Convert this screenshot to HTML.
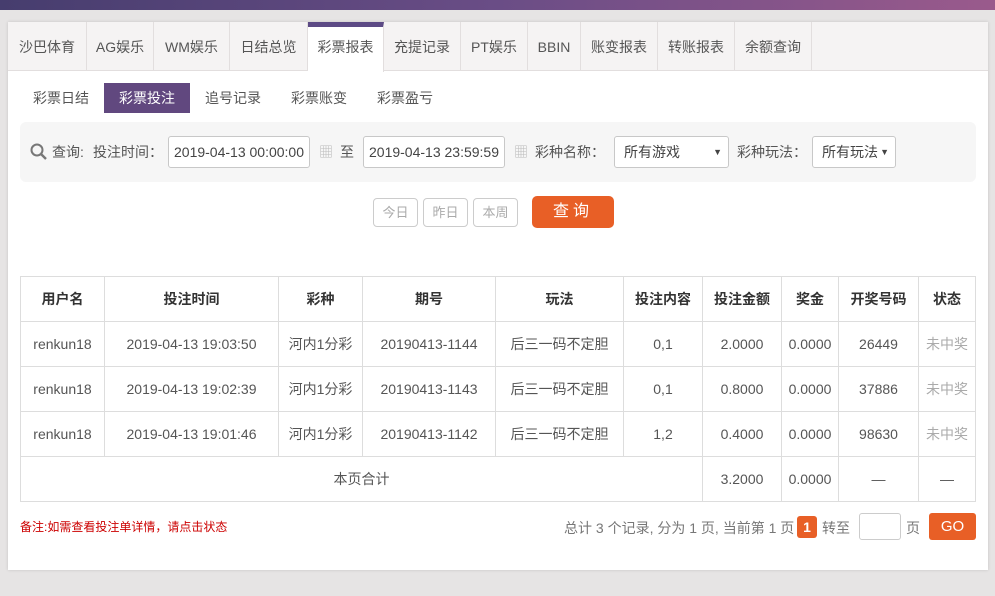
<!DOCTYPE html><html><head><meta charset="utf-8"><style>
*{margin:0;padding:0;box-sizing:border-box}
body{width:995px;height:596px;overflow:hidden;background:#e6e4e4;font-family:"Liberation Sans","Noto Sans CJK SC",sans-serif;font-size:14px;color:#555;position:relative}
.top{position:absolute;left:0;top:0;width:995px;height:10px;background:linear-gradient(90deg,#463d6e,#6a4d86 50%,#9a5a8c)}
.panel{position:absolute;left:8px;top:22px;width:980px;height:548px;background:#fff;box-shadow:0 0 3px rgba(0,0,0,.15)}
.tabs{position:absolute;left:0;top:0;width:980px;height:49px;background:#f5f3f3;border-bottom:1px solid #e2dede}
.tab{position:absolute;top:0;height:49px;line-height:50px;text-align:center;border-right:1px solid #e2dede;color:#555}
.tab.on{background:#fff;height:50px;border-top:5px solid #5c4a85;line-height:40px}
.sub{position:absolute;top:61px;height:30px;line-height:30px;color:#555}
.sub.on{background:#61487f;color:#fff;text-align:center}
.q{position:absolute;left:12px;top:100px;width:956px;height:60px;background:#f6f6f6;border-radius:6px}
.abs{position:absolute}
.inp{position:absolute;top:14px;height:32px;border:1px solid #c8c8c8;border-radius:3px;background:#fff;line-height:30px;padding-left:5px;color:#444}
.btn{position:absolute;top:176px;height:29px;border:1px solid #ccc;border-radius:4px;color:#aaa;font-size:13px;text-align:center;line-height:27px}
table{position:absolute;left:12px;top:254px;border-collapse:collapse;width:956px}
td,th{border:1px solid #ddd;height:45px;text-align:center;color:#555;font-size:14px}
th{font-weight:bold;color:#333;background:#fff}
.g{color:#aaa}
</style></head><body>
<div class="top"></div>
<div class="panel">
<div class="tabs">
<div class="tab" style="left:0;width:79px">沙巴体育</div>
<div class="tab" style="left:79px;width:67px">AG娱乐</div>
<div class="tab" style="left:146px;width:76px">WM娱乐</div>
<div class="tab" style="left:222px;width:78px">日结总览</div>
<div class="tab on" style="left:300px;width:76px">彩票报表</div>
<div class="tab" style="left:376px;width:77px">充提记录</div>
<div class="tab" style="left:453px;width:67px">PT娱乐</div>
<div class="tab" style="left:520px;width:53px">BBIN</div>
<div class="tab" style="left:573px;width:77px">账变报表</div>
<div class="tab" style="left:650px;width:77px">转账报表</div>
<div class="tab" style="left:727px;width:77px">余额查询</div>
</div>
<div class="sub" style="left:25px">彩票日结</div>
<div class="sub on" style="left:96px;width:86px">彩票投注</div>
<div class="sub" style="left:197px">追号记录</div>
<div class="sub" style="left:283px">彩票账变</div>
<div class="sub" style="left:369px">彩票盈亏</div>
<div class="q">
<svg class="abs" style="left:10px;top:21px" width="18" height="18" viewBox="0 0 18 18"><circle cx="7" cy="7" r="5.5" fill="none" stroke="#777" stroke-width="2"/><path d="M11 11l5 5" stroke="#777" stroke-width="2.4"/></svg>
<span class="abs" style="left:32px;top:20px">查询:</span>
<span class="abs" style="left:73px;top:20px">投注时间：</span>
<div class="inp" style="left:148px;width:142px">2019-04-13 00:00:00</div>
<span class="abs" style="left:299px;top:20px;color:#bbb">▦</span><span class="abs" style="left:320px;top:20px">至</span>
<div class="inp" style="left:343px;width:142px">2019-04-13 23:59:59</div>
<span class="abs" style="left:494px;top:20px;color:#bbb">▦</span>
<span class="abs" style="left:515px;top:20px">彩种名称：</span>
<div class="inp" style="left:594px;width:115px;padding-left:9px">所有游戏<span class="abs" style="right:6px;top:0;font-size:9px">▼</span></div>
<span class="abs" style="left:717px;top:20px">彩种玩法：</span>
<div class="inp" style="left:792px;width:84px;padding-left:9px">所有玩法<span class="abs" style="right:6px;top:0;font-size:9px">▼</span></div>
</div>
<div class="btn" style="left:365px;width:45px">今日</div>
<div class="btn" style="left:415px;width:45px">昨日</div>
<div class="btn" style="left:465px;width:45px">本周</div>
<div class="abs" style="left:524px;top:174px;width:82px;height:32px;background:#e85f26;border-radius:5px;color:#fff;text-align:center;line-height:32px;font-size:16px;letter-spacing:4px">查询</div>
<table>
<tr><th style="width:84px">用户名</th><th style="width:174px">投注时间</th><th style="width:84px">彩种</th><th style="width:133px">期号</th><th style="width:128px">玩法</th><th style="width:79px">投注内容</th><th style="width:79px">投注金额</th><th style="width:57px">奖金</th><th style="width:80px">开奖号码</th><th>状态</th></tr>
<tr><td>renkun18</td><td>2019-04-13 19:03:50</td><td>河内1分彩</td><td>20190413-1144</td><td>后三一码不定胆</td><td>0,1</td><td>2.0000</td><td>0.0000</td><td>26449</td><td class="g">未中奖</td></tr>
<tr><td>renkun18</td><td>2019-04-13 19:02:39</td><td>河内1分彩</td><td>20190413-1143</td><td>后三一码不定胆</td><td>0,1</td><td>0.8000</td><td>0.0000</td><td>37886</td><td class="g">未中奖</td></tr>
<tr><td>renkun18</td><td>2019-04-13 19:01:46</td><td>河内1分彩</td><td>20190413-1142</td><td>后三一码不定胆</td><td>1,2</td><td>0.4000</td><td>0.0000</td><td>98630</td><td class="g">未中奖</td></tr>
<tr><td colspan="6">本页合计</td><td>3.2000</td><td>0.0000</td><td>—</td><td>—</td></tr>
</table>
<span class="abs" style="left:12px;top:496px;color:#c00;font-size:12px">备注:如需查看投注单详情，请点击状态</span>
<span class="abs" style="left:556px;top:496px;color:#777">总计 3 个记录, 分为 1 页, 当前第 1 页</span>
<div class="abs" style="left:789px;top:494px;width:20px;height:22px;background:#e85f26;color:#fff;font-weight:bold;text-align:center;line-height:22px;border-radius:3px">1</div>
<span class="abs" style="left:814px;top:496px;color:#777">转至</span>
<div class="abs" style="left:851px;top:491px;width:42px;height:27px;border:1px solid #ccc;border-radius:3px"></div>
<span class="abs" style="left:898px;top:496px;color:#777">页</span>
<div class="abs" style="left:921px;top:491px;width:47px;height:27px;background:#e85f26;color:#fff;text-align:center;line-height:27px;border-radius:3px;font-size:15px">GO</div>
</div>
</body></html>
